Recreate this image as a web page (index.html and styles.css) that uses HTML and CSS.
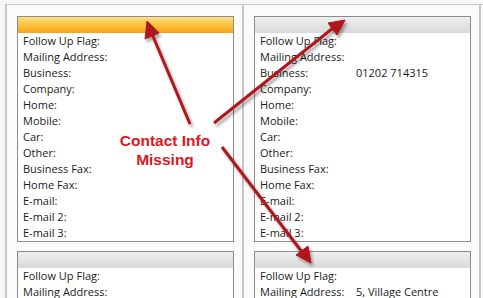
FILE: index.html
```html
<!DOCTYPE html>
<html>
<head>
<meta charset="utf-8">
<link rel="stylesheet" href="styles.css">
</head>
<body>
<div class="view">
  <div class="column">
    <div class="card">
      <div class="card-head head-selected"></div>
      <div class="rows">
        <div class="row"><span class="label">Follow Up Flag:</span></div>
        <div class="row"><span class="label">Mailing Address:</span></div>
        <div class="row"><span class="label">Business:</span></div>
        <div class="row"><span class="label">Company:</span></div>
        <div class="row"><span class="label">Home:</span></div>
        <div class="row"><span class="label">Mobile:</span></div>
        <div class="row"><span class="label">Car:</span></div>
        <div class="row"><span class="label">Other:</span></div>
        <div class="row"><span class="label">Business Fax:</span></div>
        <div class="row"><span class="label">Home Fax:</span></div>
        <div class="row"><span class="label">E-mail:</span></div>
        <div class="row"><span class="label">E-mail 2:</span></div>
        <div class="row"><span class="label">E-mail 3:</span></div>
      </div>
    </div>
    <div class="card">
      <div class="card-head"></div>
      <div class="rows">
        <div class="row"><span class="label">Follow Up Flag:</span></div>
        <div class="row"><span class="label">Mailing Address:</span></div>
      </div>
    </div>
  </div>
  <div class="column">
    <div class="card">
      <div class="card-head"></div>
      <div class="rows">
        <div class="row"><span class="label">Follow Up Flag:</span></div>
        <div class="row"><span class="label">Mailing Address:</span></div>
        <div class="row"><span class="label">Business:</span><span class="value">01202 714315</span></div>
        <div class="row"><span class="label">Company:</span></div>
        <div class="row"><span class="label">Home:</span></div>
        <div class="row"><span class="label">Mobile:</span></div>
        <div class="row"><span class="label">Car:</span></div>
        <div class="row"><span class="label">Other:</span></div>
        <div class="row"><span class="label">Business Fax:</span></div>
        <div class="row"><span class="label">Home Fax:</span></div>
        <div class="row"><span class="label">E-mail:</span></div>
        <div class="row"><span class="label">E-mail 2:</span></div>
        <div class="row"><span class="label">E-mail 3:</span></div>
      </div>
    </div>
    <div class="card">
      <div class="card-head"></div>
      <div class="rows">
        <div class="row"><span class="label">Follow Up Flag:</span></div>
        <div class="row"><span class="label">Mailing Address:</span><span class="value">5, Village Centre</span></div>
      </div>
    </div>
  </div>
  <div class="column column-edge"></div>
</div>

<div class="callout">Contact Info<br>Missing</div>

<svg class="arrows" width="483" height="298" viewBox="0 0 483 298">
  <defs>
    <filter id="sh" x="-20%" y="-20%" width="140%" height="140%">
      <feDropShadow dx="2" dy="3" stdDeviation="1.6" flood-color="#000" flood-opacity="0.35"/>
    </filter>
  </defs>
  <g filter="url(#sh)" fill="#b0181c" stroke="#b0181c">
    <line x1="190" y1="124" x2="152" y2="34" stroke-width="3"/>
    <polygon points="147,21 145,39 159,33" stroke-width="1"/>
    <line x1="214" y1="123" x2="333" y2="28" stroke-width="3"/>
    <polygon points="345,20 328,23 337,35" stroke-width="1"/>
    <line x1="222" y1="147" x2="302" y2="252" stroke-width="3"/>
    <polygon points="311,263 296,255 308,246" stroke-width="1"/>
  </g>
</svg>
</body>
</html>
```

FILE: styles.css
```css
html, body {
  margin: 0;
  padding: 0;
}
body {
  width: 483px;
  height: 298px;
  overflow: hidden;
  background: #f6f6f6;
  position: relative;
  font-family: "Open Sans", "DejaVu Sans", sans-serif;
  font-size: 11px;
  color: #1a1a1a;
}
.view {
  margin-top: 4px;
  margin-left: 5px;
  border-top: 1px solid #c8c8c8;
  display: flex;
  width: 478px;
  height: 293px;
  overflow: hidden;
  background: #fbfbfb;
}
.column {
  flex: 0 0 217px;
  border-left: 2px solid #c6c6c6;
  padding: 11px 8px 0 10px;
  display: flex;
  flex-direction: column;
  gap: 9px;
}
.column-edge {
  flex: 1 1 auto;
  padding: 0;
}
.card {
  background: #fff;
  border: 1px solid #8c8c8c;
  flex: 0 0 auto;
}
.card-head {
  height: 16px;
  background: linear-gradient(#eeeff0, #d8d9db);
}
.card-head.head-selected {
  background: linear-gradient(#fde08a, #fbc444 45%, #f8a318);
}
.rows {
  padding: 0 0 0 5px;
}
.row {
  display: flex;
  height: 16px;
  line-height: 16px;
  white-space: nowrap;
}
.label {
  flex: 0 0 96px;
}
.value {
  flex: 1;
}
.callout {
  position: absolute;
  left: 110px;
  top: 131px;
  width: 110px;
  text-align: center;
  font-family: "Liberation Sans", Arial, sans-serif;
  font-weight: bold;
  font-size: 15.5px;
  line-height: 19px;
  color: #e2141c;
}
.arrows {
  position: absolute;
  left: 0;
  top: 0;
}
```
